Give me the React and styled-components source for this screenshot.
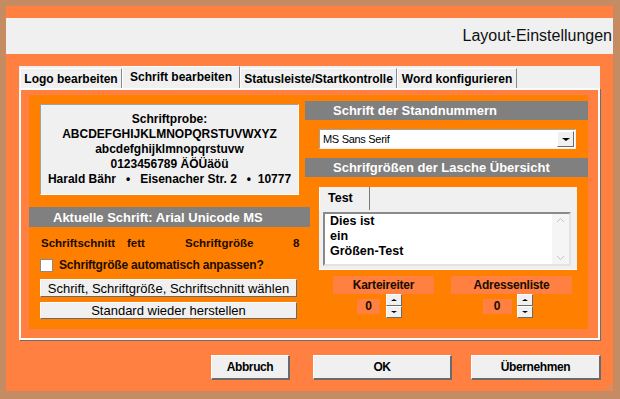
import React from "react";
import styled, { createGlobalStyle } from "styled-components";

const GlobalStyle = createGlobalStyle`
  html, body {
    margin: 0;
    padding: 0;
  }
  body {
    font-family: "Liberation Sans", Arial, sans-serif;
    background: #ffffff;
  }
`;

const Window = styled.div`
  position: relative;
  box-sizing: border-box;
  width: 620px;
  height: 399px;
  border: 6px solid #c58b63;
  border-right-width: 7px;
  border-bottom-width: 8px;
  background: #ff8040;
  padding-top: 12px;
  display: flex;
  flex-direction: column;
`;

const TitleBar = styled.div`
  height: 36px;
  background: #f0f0f0;
  display: flex;
  align-items: center;
  justify-content: flex-end;
  padding-right: 1px;
  font-size: 16px;
  color: #111;
`;

const TabControl = styled.div`
  margin: 12px 13px 0 13px;
  display: flex;
  flex-direction: column;
`;

const TabStrip = styled.div`
  height: 22px;
  background: #f0f0f0;
  display: flex;
  align-items: flex-end;
  padding-left: 1px;
`;

const Tab = styled.div`
  box-sizing: border-box;
  width: ${(p) => p.$w}px;
  height: ${(p) => (p.$active ? 22 : 20)}px;
  background: #f0f0f0;
  border-left: 1px solid #ffffff;
  border-top: 1px solid #ffffff;
  border-right: 1px solid #8a8a8a;
  display: flex;
  align-items: ${(p) => (p.$active ? "flex-start" : "center")};
  justify-content: center;
  padding-top: ${(p) => (p.$active ? 3 : 0)}px;
  font-size: 12px;
  font-weight: bold;
  color: #000;
  white-space: nowrap;
`;

const Panel = styled.div`
  box-sizing: border-box;
  height: 252px;
  border: 2px solid #fbfbfb;
  box-shadow: 1px 1px 0 #6d6d6d;
  background: #ff8040;
  padding: 5px 10px 9px 8px;
`;

const Inner = styled.div`
  height: 100%;
  background: #ff8000;
  display: grid;
  grid-template-columns: 276px 1fr;
`;

const Column = styled.div`
  display: flex;
  flex-direction: column;
`;

const SampleBox = styled.div`
  box-sizing: border-box;
  height: 91px;
  margin: 9px 6px 0 11px;
  background: #f0f0f0;
  border-top: 1px solid #a0a0a0;
  border-left: 1px solid #a0a0a0;
  border-right: 1px solid #ffffff;
  border-bottom: 1px solid #ffffff;
  display: flex;
  flex-direction: column;
  align-items: center;
  justify-content: center;
  font-size: 12px;
  font-weight: bold;
  line-height: 15px;
  color: #000;
  white-space: pre;
`;

const HeaderBand = styled.div`
  box-sizing: border-box;
  height: ${(p) => p.$h || 19}px;
  margin-top: ${(p) => p.$top}px;
  margin-right: ${(p) => p.$overhang || 0}px;
  background: #808080;
  color: #ffffff;
  font-size: 13px;
  font-weight: bold;
  display: flex;
  align-items: center;
  padding-left: ${(p) => p.$indent}px;
  white-space: nowrap;
`;

const InfoRow = styled.div`
  margin-top: 8px;
  height: 16px;
  padding-left: 12px;
  display: grid;
  grid-template-columns: 86px 58px 108px auto;
  align-items: center;
  font-size: 11.5px;
  font-weight: bold;
  color: #1a0c00;
`;

const CheckRow = styled.label`
  margin: 7px 0 0 11px;
  height: 14px;
  display: flex;
  align-items: center;
  gap: 6px;
  font-size: 12px;
  letter-spacing: -0.2px;
  font-weight: bold;
  color: #1a0c00;
`;

const CheckBox = styled.span`
  box-sizing: border-box;
  width: 13px;
  height: 13px;
  background: #ffffff;
  border: 1px solid #8a8a8a;
`;

const PanelButton = styled.div`
  box-sizing: border-box;
  height: ${(p) => p.$h}px;
  margin: ${(p) => p.$top}px 8px 0 11px;
  background: #f0f0f0;
  border-top: 1px solid #ffffff;
  border-left: 1px solid #ffffff;
  border-right: 1px solid #6a6a6a;
  border-bottom: 1px solid #6a6a6a;
  display: flex;
  align-items: center;
  justify-content: center;
  font-size: 13px;
  color: #000;
  white-space: nowrap;
`;

const Combo = styled.div`
  box-sizing: border-box;
  height: 20px;
  margin: 9px 12px 0 14px;
  background: #ffffff;
  border-top: 1px solid #a0a0a0;
  border-left: 1px solid #a0a0a0;
  border-right: 1px solid #f0f0f0;
  border-bottom: 1px solid #f0f0f0;
  display: flex;
  align-items: center;
  justify-content: space-between;
  padding: 0 1px 0 3px;
  font-size: 11px;
  letter-spacing: -0.3px;
  color: #000;
`;

const DropButton = styled.div`
  box-sizing: border-box;
  width: 17px;
  height: 16px;
  background: #f0f0f0;
  border-top: 1px solid #ffffff;
  border-left: 1px solid #ffffff;
  border-right: 1px solid #6a6a6a;
  border-bottom: 1px solid #6a6a6a;
  display: flex;
  align-items: center;
  justify-content: center;
`;

const Arrow = styled.span`
  width: 0;
  height: 0;
  border-left: ${(p) => p.$size || 4}px solid transparent;
  border-right: ${(p) => p.$size || 4}px solid transparent;
  ${(p) =>
    p.$up
      ? `border-bottom: ${(p.$size || 4) - 1}px solid #000;`
      : `border-top: ${(p.$size || 4) - 1}px solid #000;`}
`;

const TabGroup = styled.div`
  box-sizing: border-box;
  height: 83px;
  margin: 10px 11px 0 14px;
  background: #f0f0f0;
  border-bottom: 1px solid #ffffff;
  display: flex;
  flex-direction: column;
`;

const SmallTab = styled.div`
  box-sizing: border-box;
  width: 51px;
  height: 23px;
  border-right: 1px solid #7a7a7a;
  border-left: 1px solid #ffffff;
  padding: 4px 0 0 8px;
  font-size: 12.5px;
  font-weight: bold;
  color: #000;
`;

const ListBox = styled.div`
  box-sizing: border-box;
  height: 54px;
  margin: 2px 6px 0 4px;
  background: #ffffff;
  border-top: 2px solid #8a8a8a;
  border-left: 2px solid #8a8a8a;
  border-right: 2px solid #e3e3e3;
  border-bottom: 2px solid #e3e3e3;
  display: flex;
`;

const ListLines = styled.div`
  flex: 1;
  padding-left: 5px;
  font-size: 12.5px;
  font-weight: bold;
  line-height: 15px;
  color: #000;
`;

const ScrollBar = styled.div`
  width: 17px;
  background: #f5f5f5;
  display: flex;
  flex-direction: column;
  justify-content: space-between;
  align-items: center;
  padding: 3px 0;
`;

const SpinArea = styled.div`
  margin-top: 6px;
  padding-left: 28px;
  display: grid;
  grid-template-columns: 101px 121px;
  column-gap: 17px;
`;

const SpinColumn = styled.div`
  display: flex;
  flex-direction: column;
`;

const SpinLabel = styled.div`
  height: 18px;
  background: #ff8040;
  display: flex;
  align-items: center;
  justify-content: center;
  font-size: 12px;
  font-weight: bold;
  letter-spacing: -0.2px;
  color: #1a0c00;
`;

const SpinRow = styled.div`
  display: flex;
  justify-content: center;
  align-items: center;
  padding-right: 8px;
  gap: ${(p) => p.$gap}px;
`;

const SpinValue = styled.div`
  width: ${(p) => p.$w}px;
  height: 15px;
  background: #ff8040;
  display: flex;
  align-items: center;
  justify-content: center;
  font-size: 12px;
  font-weight: bold;
  color: #1a0c00;
`;

const SpinButtons = styled.div`
  display: flex;
  flex-direction: column;
`;

const SpinButton = styled.div`
  box-sizing: border-box;
  width: 16px;
  height: 12px;
  background: #f0f0f0;
  border-top: 1px solid #ffffff;
  border-left: 1px solid #ffffff;
  border-right: 1px solid #6a6a6a;
  border-bottom: 1px solid #6a6a6a;
  display: flex;
  align-items: center;
  justify-content: center;
`;

const ButtonRow = styled.div`
  margin-top: 15px;
  padding-right: 12px;
  display: flex;
  justify-content: flex-end;
`;

const DialogButton = styled.div`
  box-sizing: border-box;
  width: ${(p) => p.$w}px;
  height: 25px;
  margin-left: ${(p) => p.$gap}px;
  background: #f0f0f0;
  border-top: 1px solid #ffffff;
  border-left: 1px solid #ffffff;
  border-right: 2px solid #6a6a6a;
  border-bottom: 2px solid #6a6a6a;
  display: flex;
  align-items: center;
  justify-content: center;
  font-size: 12px;
  font-weight: bold;
  letter-spacing: -0.4px;
  color: #000;
`;

const Grip = styled.svg`
  position: absolute;
  right: 0;
  bottom: 0;
`;

const tabs = [
  { label: "Logo bearbeiten", w: 102 },
  { label: "Schrift bearbeiten", w: 118, active: true },
  { label: "Statusleiste/Startkontrolle", w: 157 },
  { label: "Word konfigurieren", w: 120 },
];

const sampleLines = [
  "Schriftprobe:",
  "ABCDEFGHIJKLMNOPQRSTUVWXYZ",
  "abcdefghijklmnopqrstuvw",
  "0123456789 ÄÖÜäöü",
  "Harald Bähr   •   Eisenacher Str. 2   •  10777",
];

const Chevron = ({ up }) => (
  <svg width="9" height="6" viewBox="0 0 9 6">
    <path
      d={up ? "M1 5 L4.5 1.5 L8 5" : "M1 1 L4.5 4.5 L8 1"}
      fill="none"
      stroke="#c4c4c4"
      strokeWidth="1"
    />
  </svg>
);

const Spinner = ({ label, valueWidth, gap }) => (
  <SpinColumn>
    <SpinLabel>{label}</SpinLabel>
    <SpinRow $gap={gap}>
      <SpinValue $w={valueWidth}>0</SpinValue>
      <SpinButtons>
        <SpinButton>
          <Arrow $up $size={3} />
        </SpinButton>
        <SpinButton>
          <Arrow $size={3} />
        </SpinButton>
      </SpinButtons>
    </SpinRow>
  </SpinColumn>
);

export default function App() {
  return (
    <>
      <GlobalStyle />
      <Window>
        <TitleBar>Layout-Einstellungen</TitleBar>

        <TabControl>
          <TabStrip>
            {tabs.map((t) => (
              <Tab key={t.label} $w={t.w} $active={t.active}>
                {t.label}
              </Tab>
            ))}
          </TabStrip>

          <Panel>
            <Inner>
              <Column>
                <SampleBox>
                  {sampleLines.map((line) => (
                    <div key={line}>{line}</div>
                  ))}
                </SampleBox>

                <HeaderBand $top={12} $h={20} $indent={24} $overhang={-5}>
                  Aktuelle Schrift: Arial Unicode MS
                </HeaderBand>

                <InfoRow>
                  <span>Schriftschnitt</span>
                  <span>fett</span>
                  <span>Schriftgröße</span>
                  <span>8</span>
                </InfoRow>

                <CheckRow>
                  <CheckBox />
                  Schriftgröße automatisch anpassen?
                </CheckRow>

                <PanelButton $top={7} $h={18}>
                  Schrift, Schriftgröße, Schriftschnitt wählen
                </PanelButton>
                <PanelButton $top={5} $h={17}>
                  Standard wieder herstellen
                </PanelButton>
              </Column>

              <Column>
                <HeaderBand $top={6} $indent={28}>
                  Schrift der Standnummern
                </HeaderBand>

                <Combo>
                  <span>MS Sans Serif</span>
                  <DropButton>
                    <Arrow />
                  </DropButton>
                </Combo>

                <HeaderBand $top={9} $indent={28}>
                  Schrifgrößen der Lasche Übersicht
                </HeaderBand>

                <TabGroup>
                  <SmallTab>Test</SmallTab>
                  <ListBox>
                    <ListLines>
                      <div>Dies ist</div>
                      <div>ein</div>
                      <div>Größen-Test</div>
                    </ListLines>
                    <ScrollBar>
                      <Chevron up />
                      <Chevron />
                    </ScrollBar>
                  </ListBox>
                </TabGroup>

                <SpinArea>
                  <Spinner label="Karteireiter" valueWidth={23} gap={6} />
                  <Spinner label="Adressenliste" valueWidth={29} gap={5} />
                </SpinArea>
              </Column>
            </Inner>
          </Panel>
        </TabControl>

        <ButtonRow>
          <DialogButton $w={79} $gap={0}>
            Abbruch
          </DialogButton>
          <DialogButton $w={139} $gap={23}>
            OK
          </DialogButton>
          <DialogButton $w={130} $gap={19}>
            Übernehmen
          </DialogButton>
        </ButtonRow>

        <Grip width="8" height="8" viewBox="0 0 8 8">
          <path d="M7 1 L1 7 M7 4 L4 7" stroke="#a0a0a0" strokeWidth="1" />
        </Grip>
      </Window>
    </>
  );
}
